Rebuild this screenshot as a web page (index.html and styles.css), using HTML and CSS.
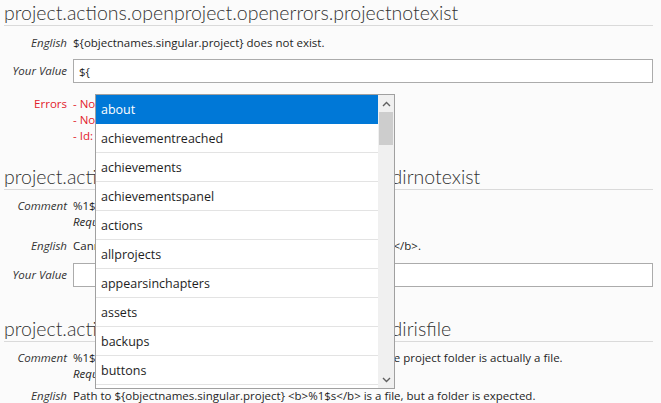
FILE: index.html
```html
<!DOCTYPE html>
<html lang="en">
<head>
  <meta charset="UTF-8">
  <title>Translations</title>
  <link rel="stylesheet" href="styles.css">
</head>
<body>

<div class="page">
  <section class="entry">
    <h2 class="key">project.actions.openproject.openerrors.projectnotexist</h2>
    <div class="fields">
      <div class="label">English</div>
      <div class="value">${objectnames.singular.project} does not exist.</div>

      <div class="label mid">Your Value</div>
      <div class="value"><input class="field" type="text" value="${"></div>

      <div class="label error gap">Errors</div>
      <div class="value error gap">
        <div>- Not a known placeholder: ${</div>
        <div>- Not closed: ${</div>
        <div>- Id: objectnames.singular.project is missing</div>
      </div>
    </div>
  </section>

  <section class="entry second">
    <h2 class="key">project.actions.openproject.openerrors.projectdirnotexist</h2>
    <div class="fields">
      <div class="label">Comment</div>
      <div class="value">
        <div>%1$s is replaced with the path to the project folder.</div>
        <div class="note">Required placeholders: %1$s</div>
      </div>

      <div class="label">English</div>
      <div class="value">Cannot find ${objectnames.singular.project} paths &lt;b&gt;%1$s&lt;/b&gt;.</div>

      <div class="label mid">Your Value</div>
      <div class="value"><input class="field" type="text" value=""></div>
    </div>
  </section>

  <section class="entry third">
    <h2 class="key">project.actions.openproject.openerrors.projectdirisfile</h2>
    <div class="fields">
      <div class="label">Comment</div>
      <div class="value">
        <div>%1$s is replaced with the path. Shown if a path exists but the project folder is actually a file.</div>
        <div class="note">Required placeholders: %1$s</div>
      </div>

      <div class="label tight">English</div>
      <div class="value tight">Path to ${objectnames.singular.project} &lt;b&gt;%1$s&lt;/b&gt; is a file, but a folder is expected.</div>
    </div>
  </section>

  <div class="suggest">
    <ul class="options">
      <li class="active">about</li>
      <li>achievementreached</li>
      <li>achievements</li>
      <li>achievementspanel</li>
      <li>actions</li>
      <li>allprojects</li>
      <li>appearsinchapters</li>
      <li>assets</li>
      <li>backups</li>
      <li>buttons</li>
    </ul>
    <div class="scrollbar">
      <div class="arrow">
        <svg width="9" height="6" viewBox="0 0 9 6"><path d="M1 5 L4.5 1.5 L8 5" fill="none" stroke="#606060" stroke-width="1.4"/></svg>
      </div>
      <div class="track"><div class="thumb"></div></div>
      <div class="arrow">
        <svg width="9" height="6" viewBox="0 0 9 6"><path d="M1 1 L4.5 4.5 L8 1" fill="none" stroke="#606060" stroke-width="1.4"/></svg>
      </div>
    </div>
  </div>
</div>

</body>
</html>
```

FILE: styles.css
```css
body, html {
  margin: 0;
  padding: 0;
  background: #fbfbfb;
  font-family: "Open Sans", "Noto Sans", sans-serif;
  color: #1e1e1e;
  overflow: hidden;
}

.page {
  position: relative;
  padding: 0 8px 0 4px;
}

.key {
  margin: 0;
  font-family: Lato, "Open Sans", sans-serif;
  font-size: 19.5px;
  font-weight: 300;
  line-height: 25px;
  height: 25px;
  color: #333;
  border-bottom: 1px solid #dadada;
  white-space: nowrap;
}

.fields {
  display: grid;
  grid-template-columns: 63px 1fr;
  column-gap: 6px;
  row-gap: 8px;
  padding-top: 9px;
  font-size: 11.5px;
  line-height: 16px;
}

.label {
  font-style: italic;
  text-align: right;
  color: #333;
}

.label.mid {
  align-self: center;
}

.value {
  white-space: nowrap;
}

.error {
  color: #e2212b;
  font-style: normal;
}

.gap {
  margin-top: 5px;
}

.tight {
  margin-top: -2px;
}

.field {
  display: block;
  box-sizing: border-box;
  width: 100%;
  height: 24px;
  margin: 0;
  padding: 0 5px;
  border: 1px solid #ababab;
  background: #fff;
  font-family: inherit;
  font-size: 11.5px;
  color: #1e1e1e;
  outline: none;
}

.entry.second {
  margin-top: 20px;
}

.entry.second .fields,
.entry.third .fields {
  padding-top: 8px;
}

.entry.second .label.mid,
.entry.second .label.mid + .value {
  margin-top: 1px;
}

.entry.third {
  margin-top: 29px;
}

.note {
  font-style: italic;
}

/* autocomplete popup */
.suggest {
  position: absolute;
  left: 95px;
  top: 94px;
  width: 298px;
  height: 293px;
  display: flex;
  background: #fff;
  border: 1px solid #a0a0a0;
}

.options {
  flex: 1;
  margin: 0;
  padding: 0;
  list-style: none;
  overflow: hidden;
}

.options li {
  height: 28px;
  line-height: 30px;
  overflow: hidden;
  padding-left: 5px;
  font-size: 12.5px;
  color: #1e1e1e;
  border-bottom: 1px solid #e3e3e3;
}

.options li.active {
  background: #0078d7;
  color: #fff;
  border-bottom-color: #0078d7;
}

.scrollbar {
  width: 16px;
  display: flex;
  flex-direction: column;
  background: #f0f0f0;
}

.arrow {
  height: 17px;
  display: flex;
  align-items: center;
  justify-content: center;
}

.track {
  flex: 1;
}

.thumb {
  height: 33px;
  margin: 0 1px;
  background: #cdcdcd;
}
```
